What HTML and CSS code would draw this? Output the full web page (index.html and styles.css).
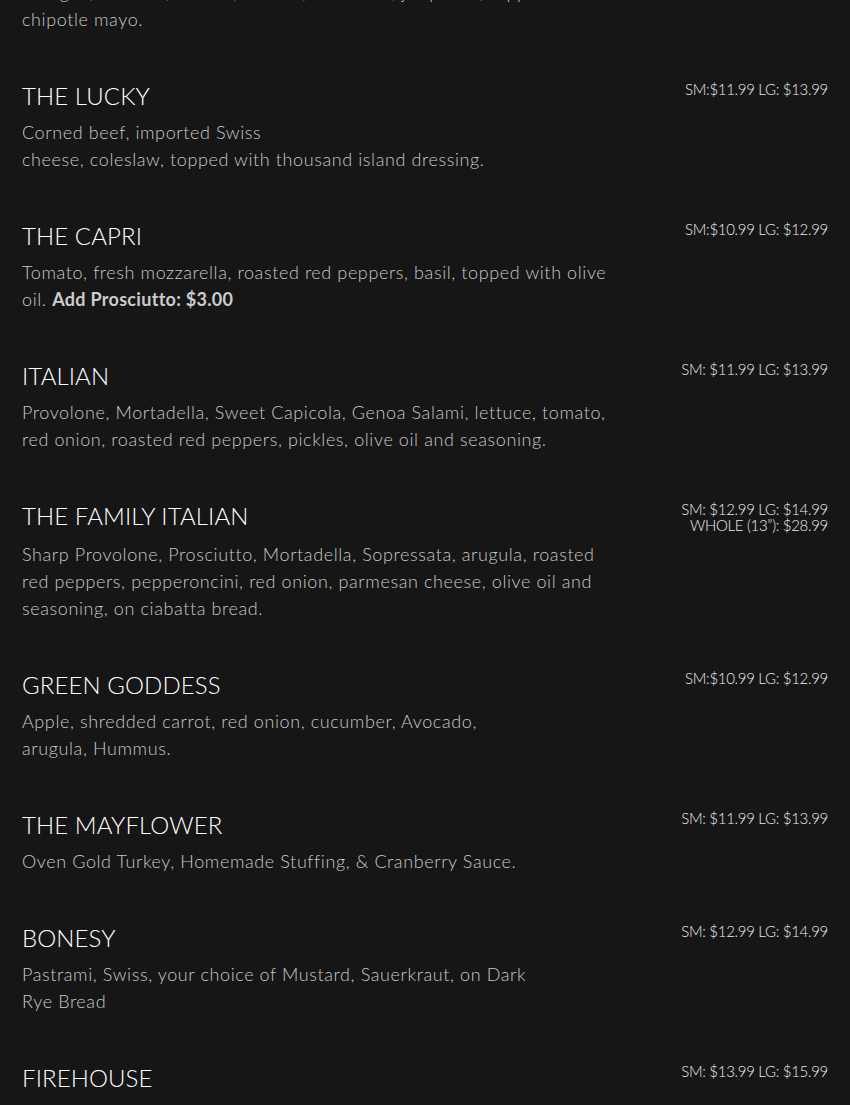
FILE: index.html
```html
<!DOCTYPE html>
<html lang="en">
<head>
<meta charset="utf-8">
<title>Sandwiches</title>
<link rel="stylesheet" href="styles.css">
</head>
<body>
<main class="menu">
  <section class="item">
    <div class="info">
      <h3 class="name">THE SMOKEHOUSE</h3>
      <p class="desc">Bologna, cheddar, lettuce, tomato, red onion, jalapeños, topped with<br>chipotle mayo.</p>
    </div>
    <div class="price">SM: $11.99 LG: $13.99</div>
  </section>

  <section class="item">
    <div class="info">
      <h3 class="name">THE LUCKY</h3>
      <p class="desc">Corned beef, imported Swiss<br>cheese, coleslaw, topped with thousand island dressing.</p>
    </div>
    <div class="price">SM:$11.99 LG: $13.99</div>
  </section>

  <section class="item">
    <div class="info">
      <h3 class="name">THE CAPRI</h3>
      <p class="desc">Tomato, fresh mozzarella, roasted red peppers, basil, topped with olive<br>oil. <strong>Add Prosciutto: $3.00</strong></p>
    </div>
    <div class="price">SM:$10.99 LG: $12.99</div>
  </section>

  <section class="item">
    <div class="info">
      <h3 class="name">ITALIAN</h3>
      <p class="desc">Provolone, Mortadella, Sweet Capicola, Genoa Salami, lettuce, tomato,<br>red onion, roasted red peppers, pickles, olive oil and seasoning.</p>
    </div>
    <div class="price">SM: $11.99 LG: $13.99</div>
  </section>

  <section class="item">
    <div class="info">
      <h3 class="name">THE FAMILY ITALIAN</h3>
      <p class="desc desc-lower">Sharp Provolone, Prosciutto, Mortadella, Sopressata, arugula, roasted<br>red peppers, pepperoncini, red onion, parmesan cheese, olive oil and<br>seasoning, on ciabatta bread.</p>
    </div>
    <div class="price">SM: $12.99 LG: $14.99<br>WHOLE (13”): $28.99</div>
  </section>

  <section class="item">
    <div class="info">
      <h3 class="name">GREEN GODDESS</h3>
      <p class="desc">Apple, shredded carrot, red onion, cucumber, Avocado,<br>arugula, Hummus.</p>
    </div>
    <div class="price">SM:$10.99 LG: $12.99</div>
  </section>

  <section class="item">
    <div class="info">
      <h3 class="name">THE MAYFLOWER</h3>
      <p class="desc">Oven Gold Turkey, Homemade Stuffing, &amp; Cranberry Sauce.</p>
    </div>
    <div class="price">SM: $11.99 LG: $13.99</div>
  </section>

  <section class="item">
    <div class="info">
      <h3 class="name">BONESY</h3>
      <p class="desc">Pastrami, Swiss, your choice of Mustard, Sauerkraut, on Dark<br>Rye Bread</p>
    </div>
    <div class="price">SM: $12.99 LG: $14.99</div>
  </section>

  <section class="item">
    <div class="info">
      <h3 class="name">FIREHOUSE</h3>
      <p class="desc">Buffalo chicken, pepper jack, lettuce, tomato, red onion, ranch dressing.</p>
    </div>
    <div class="price">SM: $13.99 LG: $15.99</div>
  </section>
</main>
</body>
</html>
```

FILE: styles.css
```css
html, body {
  margin: 0;
  padding: 0;
  background: #161616;
}

body {
  font-family: "Lato", "Open Sans", sans-serif;
  overflow: hidden;
}

.menu {
  display: flex;
  flex-direction: column;
  gap: 48px;
  padding: 0 22px;
  margin-top: -59px;
}

.item {
  display: flex;
  justify-content: space-between;
  align-items: flex-start;
}

.info {
  width: 620px;
}

.name {
  margin: 0;
  font-size: 24px;
  line-height: 30px;
  font-weight: 300;
  color: #ffffff;
  letter-spacing: 0.1px;
}

.desc {
  margin: 8px 0 0;
  font-size: 18px;
  line-height: 27px;
  font-weight: 300;
  color: #c8c8c8;
  letter-spacing: 0.6px;
}

.desc-lower {
  margin-top: 10px;
}

.desc strong {
  font-weight: 700;
  color: #cccccc;
  letter-spacing: 0.3px;
}

.price {
  font-size: 15px;
  line-height: 16px;
  font-weight: 300;
  color: #ececec;
  text-align: right;
  white-space: nowrap;
  letter-spacing: -0.3px;
}
```
